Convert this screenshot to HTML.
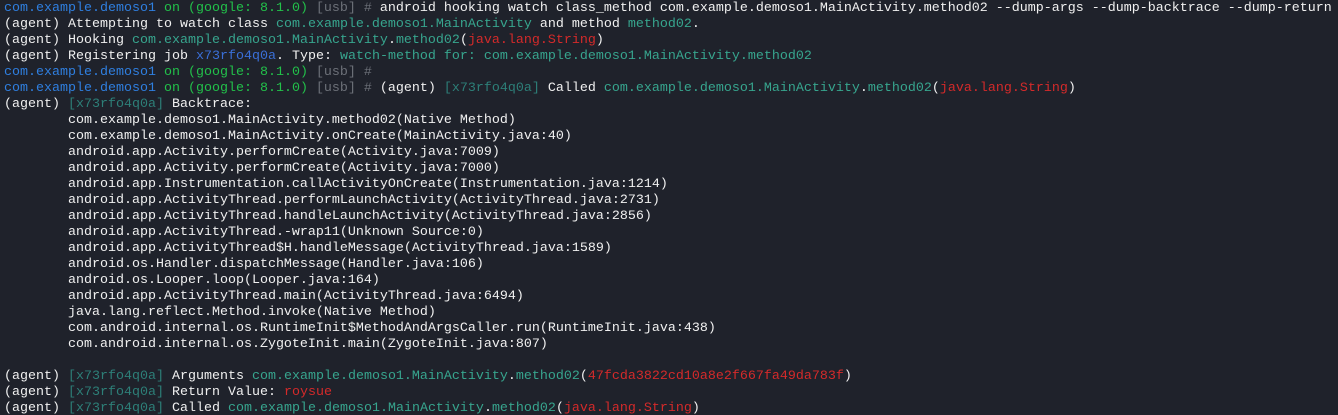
<!DOCTYPE html>
<html><head><meta charset="utf-8"><style>
html,body{margin:0;padding:0;background:#1f222b;width:1338px;height:415px;overflow:hidden}
pre{margin:0;padding:1px 0 0 4px;font-family:"Liberation Mono",monospace;font-size:13.33px;line-height:16px;color:#f0f0f0;white-space:pre}
.b{color:#2f7fe0}.g{color:#22c04a}.s{color:#6c7078}.t{color:#37a58e}.r{color:#d42a2a}.j{color:#2d7f78}.jb{color:#3a6fd8}
</style></head><body><pre><span class="b">com.example.demoso1</span> <span class="g">on (google: 8.1.0)</span> <span class="s">[usb] #</span> android hooking watch class_method com.example.demoso1.MainActivity.method02 --dump-args --dump-backtrace --dump-return
(agent) Attempting to watch class <span class="t">com.example.demoso1.MainActivity</span> and method <span class="t">method02</span>.
(agent) Hooking <span class="t">com.example.demoso1.MainActivity</span>.<span class="t">method02</span>(<span class="r">java.lang.String</span>)
(agent) Registering job <span class="jb">x73rfo4q0a</span>. Type: <span class="t">watch-method for: com.example.demoso1.MainActivity.method02</span>
<span class="b">com.example.demoso1</span> <span class="g">on (google: 8.1.0)</span> <span class="s">[usb] #</span>
<span class="b">com.example.demoso1</span> <span class="g">on (google: 8.1.0)</span> <span class="s">[usb] #</span> (agent) <span class="j">[x73rfo4q0a]</span> Called <span class="t">com.example.demoso1.MainActivity</span>.<span class="t">method02</span>(<span class="r">java.lang.String</span>)
(agent) <span class="j">[x73rfo4q0a]</span> Backtrace:
        com.example.demoso1.MainActivity.method02(Native Method)
        com.example.demoso1.MainActivity.onCreate(MainActivity.java:40)
        android.app.Activity.performCreate(Activity.java:7009)
        android.app.Activity.performCreate(Activity.java:7000)
        android.app.Instrumentation.callActivityOnCreate(Instrumentation.java:1214)
        android.app.ActivityThread.performLaunchActivity(ActivityThread.java:2731)
        android.app.ActivityThread.handleLaunchActivity(ActivityThread.java:2856)
        android.app.ActivityThread.-wrap11(Unknown Source:0)
        android.app.ActivityThread$H.handleMessage(ActivityThread.java:1589)
        android.os.Handler.dispatchMessage(Handler.java:106)
        android.os.Looper.loop(Looper.java:164)
        android.app.ActivityThread.main(ActivityThread.java:6494)
        java.lang.reflect.Method.invoke(Native Method)
        com.android.internal.os.RuntimeInit$MethodAndArgsCaller.run(RuntimeInit.java:438)
        com.android.internal.os.ZygoteInit.main(ZygoteInit.java:807)

(agent) <span class="j">[x73rfo4q0a]</span> Arguments <span class="t">com.example.demoso1.MainActivity</span>.<span class="t">method02</span>(<span class="r">47fcda3822cd10a8e2f667fa49da783f</span>)
(agent) <span class="j">[x73rfo4q0a]</span> Return Value: <span class="r">roysue</span>
(agent) <span class="j">[x73rfo4q0a]</span> Called <span class="t">com.example.demoso1.MainActivity</span>.<span class="t">method02</span>(<span class="r">java.lang.String</span>)</pre></body></html>
